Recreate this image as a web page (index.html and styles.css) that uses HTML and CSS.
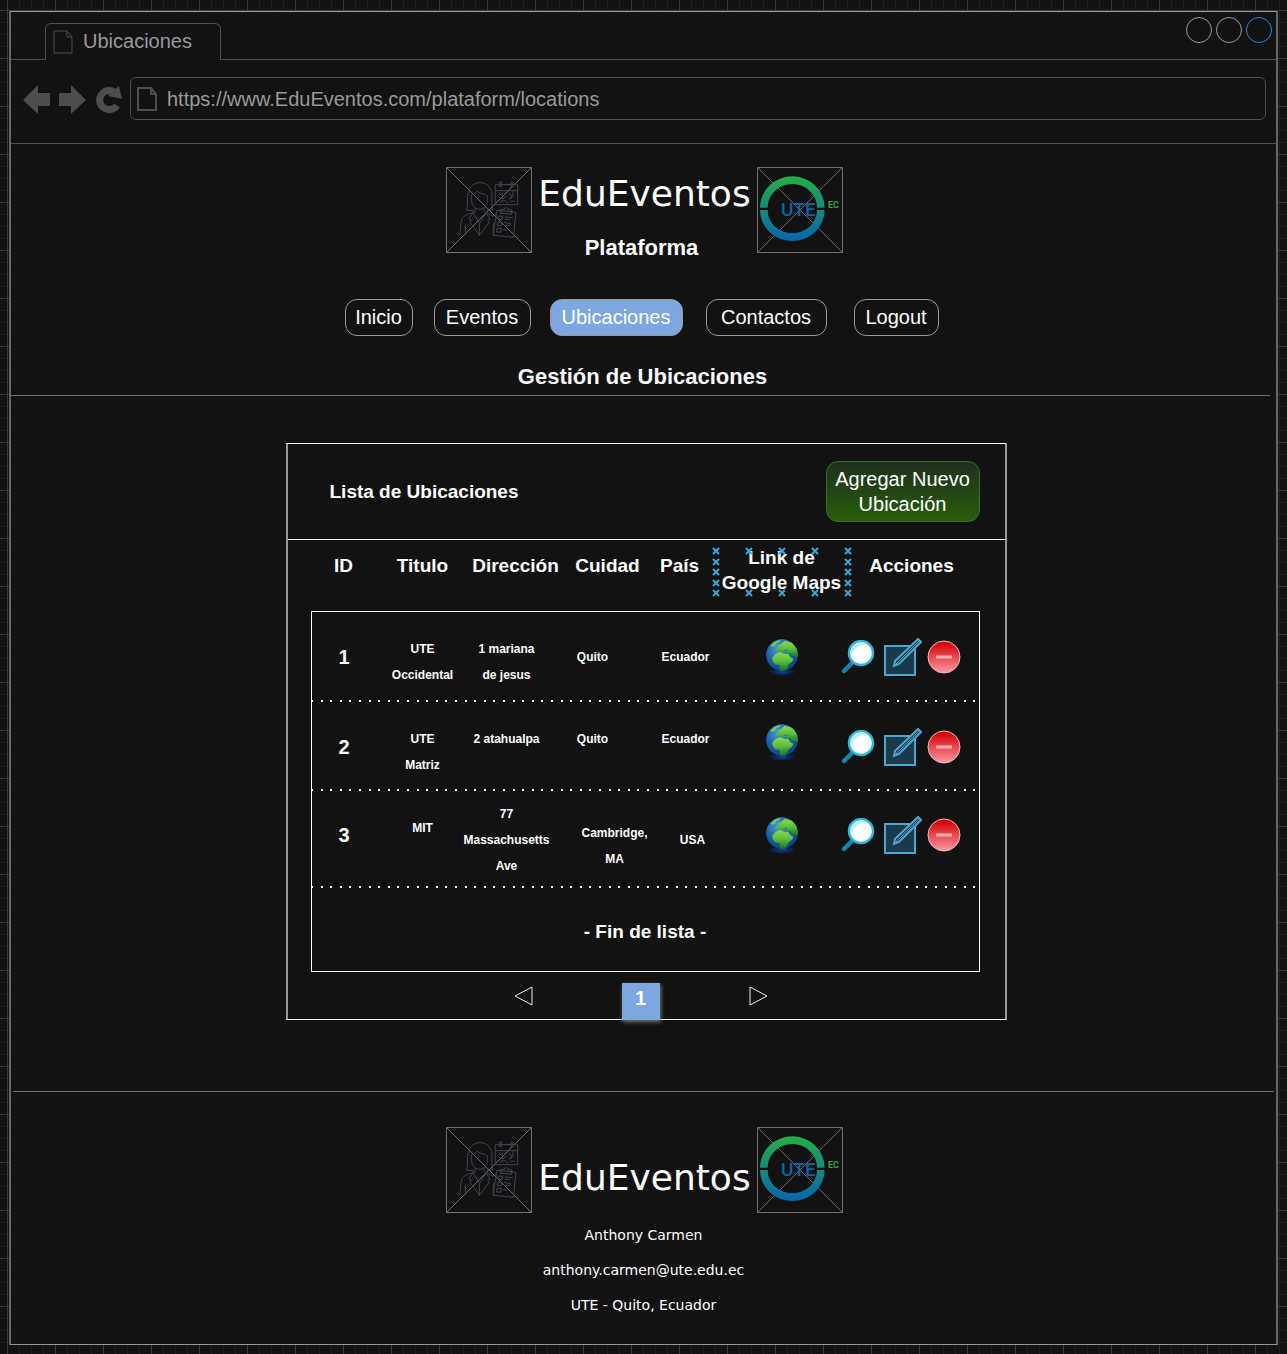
FILE: index.html
```html
<!DOCTYPE html>
<html lang="es">
<head>
<meta charset="utf-8">
<meta name="viewport" content="width=device-width, initial-scale=1">
<title>Ubicaciones</title>
<link rel="stylesheet" href="styles.css">
</head>
<body>
<svg class="defs" width="0" height="0" aria-hidden="true">
  <defs>
    <linearGradient id="ringFill" gradientUnits="userSpaceOnUse" x1="0" y1="79" x2="0" y2="273">
      <stop offset="0" stop-color="#25ac49"/><stop offset=".5" stop-color="#168a78"/><stop offset="1" stop-color="#0565ad"/>
    </linearGradient>
    <linearGradient id="removeFill" x1="0" y1="0" x2="0" y2="1">
      <stop offset="0" stop-color="#cc0000"/><stop offset=".15" stop-color="#d60f16"/><stop offset="1" stop-color="#ff9aa2"/>
    </linearGradient>
    <radialGradient id="sea" cx=".4" cy=".3" r=".75">
      <stop offset="0" stop-color="#4a9de0"/><stop offset=".5" stop-color="#1d66ab"/><stop offset="1" stop-color="#073f82"/>
    </radialGradient>
    <linearGradient id="land" x1="0" y1="0" x2="0" y2="1">
      <stop offset="0" stop-color="#8fd94f"/><stop offset=".45" stop-color="#5cc03a"/><stop offset="1" stop-color="#0d6b24"/>
    </linearGradient>
    <radialGradient id="glow"><stop offset="0" stop-color="#0a3fae"/><stop offset="1" stop-color="#0a3fae" stop-opacity="0"/></radialGradient>
    <clipPath id="globeClip"><circle cx="48" cy="48" r="48"/></clipPath>
  </defs>
  <symbol id="staff" viewBox="0 0 86 86">
    <path d="M.5.5h85v85H.5zM.5.5l85 85M85.500.5l-85 85" fill="none" stroke="#6e6e6e"/>
    <g transform="translate(-16 -17) scale(.3333)" fill="none" stroke="#3d4654" stroke-width="3" stroke-linejoin="round" stroke-linecap="round">
      <path d="M131 182l-21-1c6-20 0-35 4-51 4-21 18-32 36-32 20 0 34 13 36 34 1 18-4 32 3 48l-18 1"/>
      <path d="M124 137c6-4 12-6 17-13 8 7 21 6 31 14 4 18-5 40-24 40-16 0-28-20-24-41z"/>
      <path d="M135 176c1 10 0 11-4 15l18 29 18-29c-4-4-5-7-4-14"/>
      <path d="M131 187c-20 9-34 7-38 29l-3 38M128 190l-12 17 9 4-5 6 28 39 30-39-6-6 9-4-13-17M168 188l22 11M148 220v35M106 225v29M190 220v34"/>
      <path d="M197 104h66v60h-66zM197 122h66M209 96h6v14h-6zM244 96h6v14h-6zM222 103h16"/>
      <path d="M207 130l4 4M218 128l-2 9M210 154l16-2 8 8M206 142l14 4 10-8M236 130l12 8-10 8M246 123c8 8 0 17-4 24M240 154h13"/>
      <path d="M202 181l56 6-8 75-60-6zM213 190l32 3 1-13-12-1c0-8-10-8-10 0l-10-1z"/>
      <path d="M207 198l11 1-2 10-11-1zM205 216l11 1-2 10-11-1zM203 234l11 1-2 12-11-1zM226 201l22 2M225 208l14 1M224 218l18 2M223 226l16 1M220 239l11 1"/>
    </g>
  </symbol>
  <symbol id="ute" viewBox="0 0 86 86">
    <path d="M.5.5h85v85H.5zM.5.5l85 85M85.500.5l-85 85" fill="none" stroke="#6e6e6e"/>
    <g transform="translate(-327 -17) scale(.3333)">
      <path d="M990 173a97 94 0 0 1 194 0h-23a74 71 0 0 0-148 0zM990 180a97 93 0 0 0 194 0h-23a74 70 0 0 1-148 0z" fill="url(#ringFill)"/>
    </g>
  </symbol>
  <symbol id="page" viewBox="0 0 20 24">
    <path d="M1 1h13l5 6v16H1zM14 1v6h5" fill="none" stroke="currentColor"/>
  </symbol>
  <symbol id="globe" viewBox="0 0 34 38">
    <ellipse cx="17" cy="34" rx="14" ry="4" fill="url(#glow)"/>
    <g transform="translate(1 1) scale(.3333)" clip-path="url(#globeClip)">
      <circle cx="48" cy="48" r="48" fill="url(#sea)"/>
      <path d="M46 14l10-9 22 6 14 17 5 22-5 8-6-8-6 3-7-11-9 1-5-6-8 4-3-8-6 6-8-1-5-5 6-6 8-2-3-6z" fill="url(#land)"/>
      <path d="M20 66l-1-10 9-11 14-6 12 5 13 1 6 10 9 4-4 9-10 8-4 9-6 11-12 2-5-8 0-12-14-2z" fill="url(#land)"/>
      <path d="M13 20l11-11 17-6 2 5-10 4-6 9-8 2zM34 19l6-3 1 6-5 3z" fill="#6cc75a"/>
      <path d="M53 34l8-3 4 4-6 2z" fill="#2a78b0"/>
    </g>
  </symbol>
  <symbol id="search" viewBox="0 0 34 34">
    <path d="M3 31L13 21" stroke="#1583ad" stroke-width="4.500" stroke-linecap="round"/>
    <circle cx="20" cy="13" r="12" fill="#fff" stroke="#2bb9de" stroke-width="2.500"/>
    <path d="M10 16a10.500 10.500 0 0 1 15-12C17 5 12 9 10 16z" fill="#b9ecfa"/>
  </symbol>
  <symbol id="edit" viewBox="0 0 38 38">
    <path d="M1 8h30v29H1z" fill="#193a4a" stroke="#4ea6cf" stroke-width="2"/>
    <path d="M10 28l1-5L34 1l3 3-22 22z" fill="#193a4a" stroke="#4ea6cf" stroke-width="2"/>
    <path d="M12 26L35 3" stroke="#4ea6cf"/>
  </symbol>
  <symbol id="remove" viewBox="0 0 34 34">
    <circle cx="17" cy="17" r="16" fill="url(#removeFill)" stroke="#ffb3b3"/>
    <path d="M9 17h16" stroke="#ffb3b3" stroke-width="3"/>
  </symbol>
  <symbol id="anchors" viewBox="0 0 140 50">
    <path id="x" d="M1 1l6 6M7 1l-6 6" stroke="#33a8dc" stroke-width="2"/>
    <use href="#x" x="33"/><use href="#x" x="66"/><use href="#x" x="99"/><use href="#x" x="132"/>
    <use href="#x" y="11"/><use href="#x" x="132" y="11"/>
    <use href="#x" y="21"/><use href="#x" x="132" y="21"/>
    <use href="#x" y="32"/><use href="#x" x="132" y="32"/>
    <use href="#x" y="42"/><use href="#x" x="33" y="42"/><use href="#x" x="66" y="42"/><use href="#x" x="99" y="42"/><use href="#x" x="132" y="42"/>
  </symbol>
</svg>

<div class="window">
  <div class="tab-bar">
    <div class="tab"><svg class="tab-icon" aria-hidden="true"><use href="#page"/></svg>Ubicaciones</div>
    <div class="controls">
      <button class="control" aria-label="Minimizar"></button>
      <button class="control" aria-label="Maximizar"></button>
      <button class="control control-close" aria-label="Cerrar"></button>
    </div>
  </div>
  <div class="toolbar">
    <button class="tool" aria-label="Atrás"><svg width="28" height="30" viewBox="0 0 28 30"><path d="M0 15L15 0v8h12v13H15v8z" fill="#4d4d4d"/></svg></button>
    <button class="tool" aria-label="Adelante"><svg width="28" height="30" viewBox="0 0 28 30"><path d="M27 15L12 0v8H0v13h12v8z" fill="#4d4d4d"/></svg></button>
    <button class="tool" aria-label="Recargar"><svg width="28" height="30" viewBox="0 0 28 30"><path d="M22 20.500a9.500 9.500 0 1 1-1-12" fill="none" stroke="#4d4d4d" stroke-width="7"/><path d="M24 1l3 13-14-3z" fill="#4d4d4d"/></svg></button>
    <label class="address"><svg class="address-icon" aria-hidden="true"><use href="#page"/></svg><input class="address-input" type="text" aria-label="Dirección web" value="https://www.EduEventos.com/plataform/locations"></label>
  </div>

  <header class="site-header">
    <div class="brand">
      <svg class="logo" role="img" aria-label="Personal"><use href="#staff"/></svg>
      <div class="brand-text">
        <h1 class="brand-name">EduEventos</h1>
        <p class="brand-sub">Plataforma</p>
      </div>
      <svg class="logo" role="img" aria-label="Universidad"><use href="#ute"/><text x="24" y="49" class="logo-ute">UTE</text><text x="71" y="41" class="logo-ec">EC</text></svg>
    </div>
    <nav class="nav">
      <button class="nav-item nav-inicio">Inicio</button>
      <button class="nav-item nav-eventos">Eventos</button>
      <button class="nav-item nav-ubicaciones active">Ubicaciones</button>
      <button class="nav-item nav-contactos">Contactos</button>
      <button class="nav-item nav-logout">Logout</button>
    </nav>
    <h2 class="page-title">Gestión de Ubicaciones</h2>
  </header>

  <main class="main">
    <section class="card">
      <div class="card-head">
        <h3 class="card-title">Lista de Ubicaciones</h3>
        <button class="add">Agregar Nuevo Ubicación</button>
      </div>
      <table class="list">
        <colgroup><col class="c-id"><col class="c-title"><col class="c-address"><col class="c-city"><col class="c-country"><col class="c-link"><col class="c-actions"></colgroup>
        <thead>
          <tr><th>ID</th><th class="h-title">Titulo</th><th class="h-address">Dirección</th><th>Cuidad</th><th class="h-country">País</th>
            <th class="h-link">Link de Google Maps<svg class="anchors" aria-hidden="true"><use href="#anchors"/></svg></th><th class="h-actions">Acciones</th></tr>
        </thead>
        <tbody>
          <tr class="row-1">
            <td class="id">1</td><td class="title top">UTE<br>Occidental</td><td class="address-cell top">1 mariana<br>de jesus</td><td class="city">Quito</td><td class="country">Ecuador</td>
            <td><a class="map" href="#" aria-label="Mapa"><svg width="34" height="38"><use href="#globe"/></svg></a></td>
            <td><div class="actions"><button class="action" aria-label="Ver"><svg width="34" height="34"><use href="#search"/></svg></button><button class="action action-edit" aria-label="Editar"><svg width="38" height="38"><use href="#edit"/></svg></button><button class="action" aria-label="Eliminar"><svg width="34" height="34"><use href="#remove"/></svg></button></div></td>
          </tr>
          <tr class="row-2">
            <td class="id">2</td><td class="title top">UTE<br>Matriz</td><td class="address-cell top">2 atahualpa</td><td class="city top">Quito</td><td class="country top">Ecuador</td>
            <td class="raised"><a class="map" href="#" aria-label="Mapa"><svg width="34" height="38"><use href="#globe"/></svg></a></td>
            <td><div class="actions"><button class="action" aria-label="Ver"><svg width="34" height="34"><use href="#search"/></svg></button><button class="action action-edit" aria-label="Editar"><svg width="38" height="38"><use href="#edit"/></svg></button><button class="action" aria-label="Eliminar"><svg width="34" height="34"><use href="#remove"/></svg></button></div></td>
          </tr>
          <tr class="row-3">
            <td class="id raised">3</td><td class="title top">MIT</td><td class="address-cell">77<br>Massachusetts<br>Ave</td><td class="city-long low">Cambridge,<br>MA</td><td class="country-short">USA</td>
            <td class="raised"><a class="map" href="#" aria-label="Mapa"><svg width="34" height="38"><use href="#globe"/></svg></a></td>
            <td class="raised"><div class="actions"><button class="action" aria-label="Ver"><svg width="34" height="34"><use href="#search"/></svg></button><button class="action action-edit" aria-label="Editar"><svg width="38" height="38"><use href="#edit"/></svg></button><button class="action" aria-label="Eliminar"><svg width="34" height="34"><use href="#remove"/></svg></button></div></td>
          </tr>
          <tr class="row-end"><td class="end" colspan="7">- Fin de lista -</td></tr>
        </tbody>
      </table>
      <div class="pager">
        <button class="arrow" aria-label="Anterior"><svg width="20" height="22" viewBox="0 0 20 22"><path d="M2 11L19 2v18z" fill="none" stroke="#eee"/></svg></button>
        <button class="page-number">1</button>
        <button class="arrow" aria-label="Siguiente"><svg width="20" height="22" viewBox="0 0 20 22"><path d="M18 11L1 2v18z" fill="none" stroke="#eee"/></svg></button>
      </div>
    </section>
  </main>

  <footer class="site-footer">
    <div class="brand">
      <svg class="logo" role="img" aria-label="Personal"><use href="#staff"/></svg>
      <div class="brand-text brand-text-low"><p class="brand-name">EduEventos</p></div>
      <svg class="logo" role="img" aria-label="Universidad"><use href="#ute"/><text x="24" y="49" class="logo-ute">UTE</text><text x="71" y="41" class="logo-ec">EC</text></svg>
    </div>
    <address class="contact">
      <span>Anthony Carmen</span>
      <span>anthony.carmen@ute.edu.ec</span>
      <span>UTE - Quito, Ecuador</span>
    </address>
  </footer>
</div>
</body>
</html>
```
FILE: styles.css
```css
* { box-sizing: border-box; }

body {
  margin: 0;
  padding: 11px 9px 10px;
  background-color: #121212;
  background-image:
    linear-gradient(to right, #3a3a3a 1px, transparent 1px),
    linear-gradient(to bottom, #3a3a3a 1px, transparent 1px),
    linear-gradient(to right, #1e1e1e 1px, transparent 1px),
    linear-gradient(to bottom, #1e1e1e 1px, transparent 1px);
  background-size: 48px 48px, 48px 48px, 12px 12px, 12px 12px;
  background-position: 7px 10px;
  color: #fff;
  font: 20px/25px "Liberation Sans", Arial, sans-serif;
}

h1, h2, h3, p { margin: 0; }
button { padding: 0; border: 0; background: none; color: inherit; font: inherit; cursor: pointer; }
svg { display: block; flex: none; }
.defs { position: absolute; }

.window {
  border: solid;
  border-width: 1px 2px;
  border-color: #999 #666;
  background: #121212;
}

/* Browser chrome */
.tab-bar {
  display: flex;
  justify-content: space-between;
  align-items: flex-start;
  height: 48px;
  padding: 5px 4px 0 34px;
  border-bottom: 1px solid #4d4d4d;
}
.tab {
  display: flex;
  align-items: center;
  gap: 10px;
  width: 176px;
  height: 37px;
  margin-top: 6px;
  padding: 0 7px 2px;
  border: 1px solid #4d4d4d;
  border-bottom: 0;
  border-radius: 6px 6px 0 0;
  background: #121212;
  color: #999;
}
.tab-icon { width: 20px; height: 24px; margin-top: 2px; color: #4d4d4d; }
.controls { display: flex; gap: 4px; }
.control { width: 26px; height: 26px; border: 1px solid #999; border-radius: 50%; }
.control-close { border-color: #1e8ae0; }

.toolbar {
  display: flex;
  align-items: center;
  gap: 8px;
  height: 84px;
  padding: 0 10px 6px 12px;
  border-bottom: 1px solid #4d4d4d;
}
.tool { flex: none; margin-top: 3px; }
.address {
  display: flex;
  flex: 1;
  align-items: center;
  gap: 10px;
  height: 43px;
  margin-left: -1px;
  padding: 0 6px;
  border: 1px solid #4d4d4d;
  border-radius: 6px;
}
.address-icon { width: 20px; height: 24px; color: #4d4d4d; stroke-width: 2px; }
.address-input {
  flex: 1;
  min-width: 0;
  padding: 1px 0 0;
  border: 0;
  outline: 0;
  background: none;
  color: #999;
  font: inherit;
}

/* Site header */
.site-header {
  margin-right: 6px;
  padding: 23px 0 0 2px;
  border-bottom: 1px solid #6e6e6e;
}
.brand { display: flex; justify-content: center; padding-left: 2px; }
.site-header .brand { padding-left: 6px; }
.logo { width: 86px; height: 86px; }
.logo-ute { fill: #0565ad; font: 500 19px Roboto, sans-serif; }
.logo-ec { fill: #25ac49; font: bold 9px Roboto, sans-serif; }
.brand-text { width: 225px; padding-top: 5px; text-align: center; }
.brand-text-low { padding-top: 29px; }
.brand-name { font: 36px/44px Verdana, "DejaVu Sans", sans-serif; }
.brand-sub { margin-top: 19px; padding-right: 6px; font-size: 22px; font-weight: bold; }
.nav {
  display: grid;
  grid-template-columns: 89px 116px 156px 148px 85px;
  justify-content: center;
  justify-items: start;
  margin-top: 39px;
}
.nav-item { height: 37px; border: 1px solid #999; border-radius: 12px; }
.nav-inicio { width: 68px; }
.nav-eventos { width: 97px; }
.nav-ubicaciones { width: 133px; }
.nav-contactos { width: 121px; }
.nav-logout { width: 85px; }
.nav-item.active { background: #7ea6e0; }
.page-title { margin-top: 28px; padding: 0 0 6px 2px; font-size: 22px; line-height: 25px; text-align: center; }

/* Locations card */
.main { padding: 47px 0 71px 5px; }
.card {
  width: 721px;
  max-width: 100%;
  margin: 0 auto;
  border: solid;
  border-width: 1px 2px;
  border-color: #fff #999;
}
.card-head {
  display: flex;
  align-items: center;
  justify-content: space-between;
  height: 96px;
  padding: 0 25px 0 42px;
  border-bottom: 1px solid #fff;
}
.card-title { font-size: 19px; }
.add {
  width: 154px;
  height: 61px;
  border: 1px solid #3d6b2c;
  border-radius: 12px;
  background: linear-gradient(#1f2f1e, #285e08);
}

.list {
  width: 669px;
  margin-left: 23px;
  border-spacing: 0;
  table-layout: fixed;
  font-size: 12px;
  font-weight: bold;
  line-height: 26px;
  text-align: center;
}
.c-id { width: 66px; }
.c-title { width: 82px; }
.c-address { width: 104px; }
.c-city { width: 90px; }
.c-country { width: 62px; }
.c-link { width: 134px; }
.c-actions { width: 131px; }
.list thead tr { height: 71px; }
.list th { padding: 13px 0 0; font-size: 19px; line-height: 25px; vertical-align: top; }
.list .h-title, .list .h-address, .list .title { padding-left: 10px; }
.list .h-country { padding-right: 8px; }
.list .h-actions { padding-right: 5px; }
.list .h-link { position: relative; padding-top: 5px; }
.anchors { position: absolute; top: 7px; left: -3px; width: 140px; height: 50px; }

.list td { padding: 0; vertical-align: middle; }
.list tbody td:first-child { border-left: 1px solid #fff; }
.list tbody td:last-child { border-right: 1px solid #fff; }
.row-1 td { border-top: 1px solid #fff; }
.row-1, .row-2, .row-3 {
  background: repeating-linear-gradient(to right, #fff 0 2px, transparent 2px calc(48px / 5)) left bottom / 100% 2px no-repeat;
}
.row-1 { height: 91px; }
.row-2 { height: 89px; }
.row-3 { height: 97px; }
.row-end { height: 84px; }
.list .top { padding-top: 24px; vertical-align: top; }
.list .low { padding-top: 12px; }
.list .raised { padding-bottom: 10px; }
.list .address-cell { padding-right: 8px; }
.list .city { padding-right: 30px; }
.list .city-long { padding-left: 14px; }
.list .country { padding-left: 4px; }
.list .country-short { padding-left: 18px; }
.id { font-size: 20px; }
.list .end { padding-top: 4px; border-bottom: 1px solid #fff; font-size: 19px; }
.map { display: flex; justify-content: center; }
.actions { display: flex; align-items: center; justify-content: flex-end; gap: 5px; padding-right: 18px; }
.action { flex: none; }
.action-edit { margin-left: 4px; }

.pager {
  display: flex;
  align-items: flex-end;
  justify-content: center;
  gap: 89px;
  height: 47px;
  padding-right: 11px;
}
.arrow { margin-bottom: 12px; }
.page-number {
  width: 38px;
  height: 37px;
  margin-bottom: -1px;
  padding-bottom: 6px;
  background: #7ea6e0;
  box-shadow: 1px 2px 4px #777;
  font-weight: bold;
}

/* Footer */
.site-footer { margin: 0 2px; padding: 35px 0 21px; border-top: 1px solid #6e6e6e; }
.contact {
  display: flex;
  flex-direction: column;
  align-items: center;
  padding-top: 5px;
  font: normal 14px/35px Verdana, "DejaVu Sans", sans-serif;
}
```
